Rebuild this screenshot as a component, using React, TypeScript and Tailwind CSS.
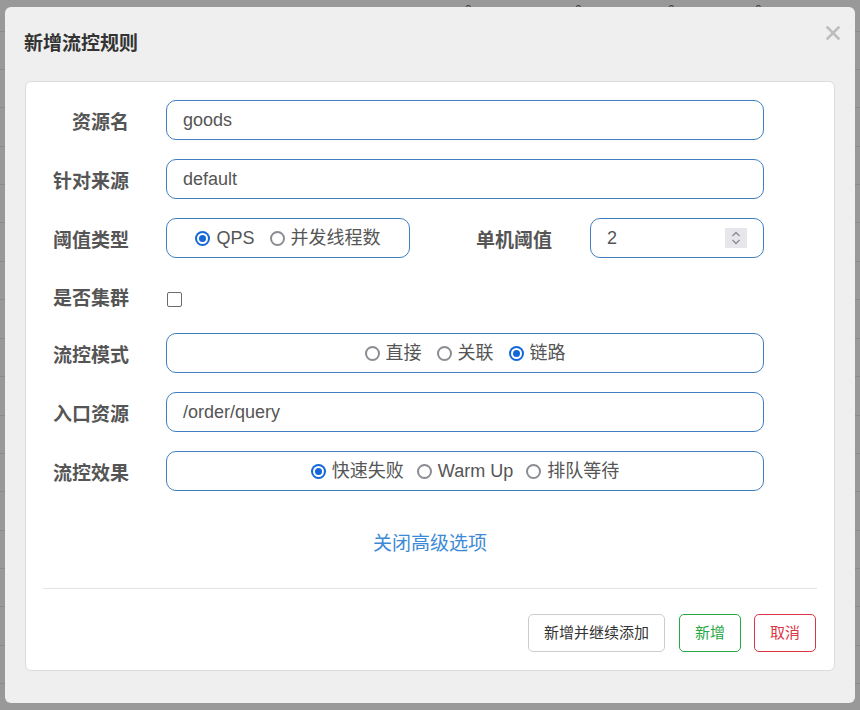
import React from 'react';

const font = { fontFamily: '"Liberation Sans", "Noto Sans CJK SC", sans-serif' };

// faint table rows behind the overlay
const rowLines = [31, 69, 107, 146, 184, 222, 261, 299, 338, 376, 415, 453, 491, 530, 568, 606, 645, 683];

const Radio: React.FC<{ checked?: boolean; label: string }> = ({ checked, label }) => (
  <span className="flex items-center gap-[6px]">
    {checked ? (
      <span className="w-[15px] h-[15px] rounded-full bg-[#1467d9] flex items-center justify-center">
        <span className="w-[11px] h-[11px] rounded-full bg-white flex items-center justify-center">
          <span className="w-[7px] h-[7px] rounded-full bg-[#1467d9]" />
        </span>
      </span>
    ) : (
      <span className="w-[15px] h-[15px] rounded-full border-2 border-[#8c8c94] bg-white" />
    )}
    <span>{label}</span>
  </span>
);

const Label: React.FC<{ children: React.ReactNode }> = ({ children }) => (
  <div className="w-[103px] shrink-0 text-right font-bold text-[19px] text-[#555] mr-[37px] pt-[6px]">{children}</div>
);

const boxCls = 'h-[40px] border border-[#3f7fc0] rounded-[10px] bg-white flex items-center text-[18px] text-[#555]';

export default function App() {
  return (
    <div className="relative w-[860px] h-[710px] bg-[#999] overflow-hidden" style={font}>
      {/* page behind the overlay */}
      {rowLines.map((y) => (
        <div key={y} className="absolute left-0 right-0 h-px bg-[#8c8c8c]" style={{ top: y }} />
      ))}
      {[465, 575, 668, 755].map((x) => (
        <span key={x} className="absolute top-[1px] text-[12px] text-[#444]" style={{ left: x }}>0</span>
      ))}

      {/* modal */}
      <div className="absolute left-[5px] top-[7px] w-[850px] h-[696px] bg-[#efefef] rounded-[6px] flex flex-col">
        <div className="flex items-start justify-between pl-[19px] pr-[15px] pt-[20px] h-[74px]">
          <h3 className="text-[19px] font-bold text-[#333] mt-[3px]">新增流控规则</h3>
          <svg width="14" height="14" viewBox="0 0 14 14" className="mt-[-1px]">
            <path d="M1.5 1.5 L12.5 12.5 M12.5 1.5 L1.5 12.5" stroke="#bdbdbd" strokeWidth="2.6" strokeLinecap="square" />
          </svg>
        </div>

        <div className="mx-[20px] h-[590px] bg-white border border-[#dcdcdc] rounded-[6px] flex flex-col pt-[18px]">
          <div className="flex flex-col gap-[19px]">
            <div className="flex items-center">
              <Label>资源名</Label>
              <div className={`${boxCls} w-[598px] pl-[16px]`}>goods</div>
            </div>
            <div className="flex items-center">
              <Label>针对来源</Label>
              <div className={`${boxCls} w-[598px] pl-[16px]`}>default</div>
            </div>
            <div className="flex items-center">
              <Label>阈值类型</Label>
              <div className={`${boxCls} w-[244px] justify-center gap-[15px]`}>
                <Radio checked label="QPS" />
                <Radio label="并发线程数" />
              </div>
              <div className="ml-[66px] mr-[38px] font-bold text-[19px] text-[#555] pt-[6px]">单机阈值</div>
              <div className={`${boxCls} w-[174px] pl-[16px] pr-[16px] justify-between`}>
                <span>2</span>
                <span className="w-[22px] h-[20px] bg-[#e6e6ec] flex items-center justify-center">
                  <svg width="10" height="16" viewBox="0 0 10 16">
                    <path d="M1.5 6 L5 2.5 L8.5 6 M1.5 10 L5 13.5 L8.5 10" fill="none" stroke="#8a8a92" strokeWidth="1.3" />
                  </svg>
                </span>
              </div>
            </div>
          </div>

          <div className="flex items-center h-[38px] mt-[19px]">
            <Label>是否集群</Label>
            <span className="w-[15px] h-[15px] border-[1.5px] border-[#6b6b6b] rounded-[2px] bg-white mt-[6px] ml-px" />
          </div>

          <div className="flex flex-col gap-[19px] mt-[18px]">
            <div className="flex items-center">
              <Label>流控模式</Label>
              <div className={`${boxCls} w-[598px] justify-center gap-[15px]`}>
                <Radio label="直接" />
                <Radio label="关联" />
                <Radio checked label="链路" />
              </div>
            </div>
            <div className="flex items-center">
              <Label>入口资源</Label>
              <div className={`${boxCls} w-[598px] pl-[16px]`}>/order/query</div>
            </div>
            <div className="flex items-center">
              <Label>流控效果</Label>
              <div className={`${boxCls} w-[598px] justify-center gap-[13px]`}>
                <Radio checked label="快速失败" />
                <Radio label="Warm Up" />
                <Radio label="排队等待" />
              </div>
            </div>
          </div>

          <div className="h-[40px] mt-[33px] flex items-center justify-center text-[19px] text-[#3c8ad6]">
            关闭高级选项
          </div>

          <div className="mx-[17px] mt-[24px] h-px bg-[#e3e3e3]" />

          <div className="flex justify-end mr-[18px] mt-[25px]">
            <button className="h-[38px] w-[137px] border border-[#cccccc] rounded-[5px] bg-white text-[15px] text-[#333]">
              新增并继续添加
            </button>
            <button className="h-[38px] w-[62px] ml-[14px] border border-[#28a745] rounded-[5px] bg-white text-[15px] text-[#28a745]">
              新增
            </button>
            <button className="h-[38px] w-[62px] ml-[13px] border border-[#dc3545] rounded-[5px] bg-white text-[15px] text-[#dc3545]">
              取消
            </button>
          </div>
        </div>
      </div>
    </div>
  );
}
